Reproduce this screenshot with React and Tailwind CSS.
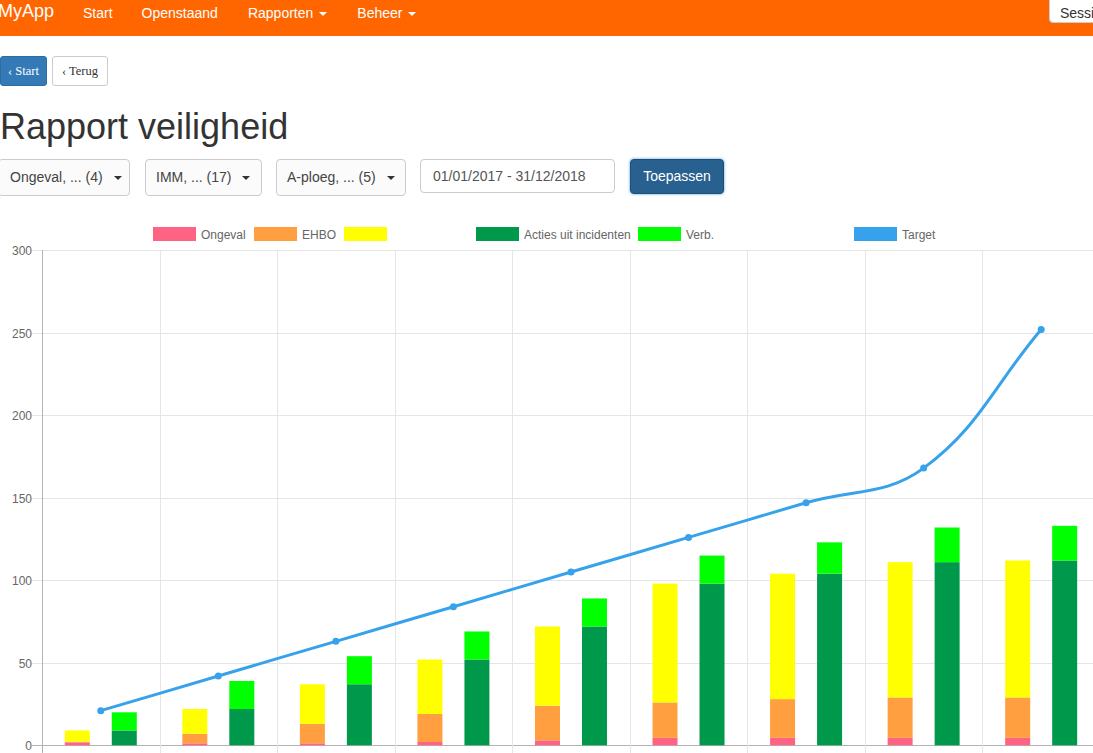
import React from 'react';

const X0 = 42;
const CW = 117.55;
const Y0 = 745.3;
const K = 1.65;

const yOf = (v) => Y0 - v * K;
const cxOf = (i) => X0 + CW * (i + 0.5);

// cumulative tops per category
const pink = [1.8, 1.2, 1.2, 2, 3, 4.5, 4.5, 4.5, 4.5];
const orange = [2.2, 7, 13, 19, 24, 26, 28, 29, 29];
const yellow = [9, 22, 37, 52, 72, 98, 104, 111, 112];
const darkGreen = [9, 22, 37, 52, 72, 98, 104, 111, 112];
const lightGreen = [20, 39, 54, 69, 89, 115, 123, 132, 133];
const target = [21, 42, 63, 84, 105, 126, 147, 168, 252];

const legend = [
    { x: 153, color: '#ff6384', label: 'Ongeval' },
    { x: 254, color: '#ff9f40', label: 'EHBO' },
    { x: 344, color: '#ffff00', label: '' },
    { x: 476, color: '#00994c', label: 'Acties uit incidenten' },
    { x: 638, color: '#00ff00', label: 'Verb.' },
    { x: 854, color: '#36a2eb', label: 'Target' },
];

function splinePath(pts, t = 0.4) {
    const cps = pts.map((p, i) => {
        const prev = pts[i - 1] || p;
        const next = pts[i + 1] || p;
        const d01 = Math.hypot(p.x - prev.x, p.y - prev.y);
        const d12 = Math.hypot(next.x - p.x, next.y - p.y);
        const s01 = d01 + d12 ? d01 / (d01 + d12) : 0;
        const s12 = d01 + d12 ? d12 / (d01 + d12) : 0;
        const fa = t * s01;
        const fb = t * s12;
        return {
            prev: { x: p.x - fa * (next.x - prev.x), y: p.y - fa * (next.y - prev.y) },
            next: { x: p.x + fb * (next.x - prev.x), y: p.y + fb * (next.y - prev.y) },
        };
    });
    let d = `M${pts[0].x},${pts[0].y}`;
    for (let i = 1; i < pts.length; i++) {
        const a = cps[i - 1].next;
        const b = cps[i].prev;
        d += ` C${a.x},${a.y} ${b.x},${b.y} ${pts[i].x},${pts[i].y}`;
    }
    return d;
}

function Caret({ className = 'ml-[6px] border-t-white' }) {
    return (
        <span
            className={`inline-block w-0 h-0 align-middle border-t-[4px] border-x-[4px] border-x-transparent ${className}`}
        />
    );
}

function Chart() {
    const font = 'Liberation Sans, Arial, sans-serif';
    const ticks = [0, 50, 100, 150, 200, 250, 300];
    const pts = target.map((v, i) => ({ x: cxOf(i), y: yOf(v) }));

    return (
        <svg width="1100" height="543" viewBox="0 210 1100 543" className="block">
            {/* legend */}
            {legend.map((l) => (
                <g key={l.x}>
                    <rect x={l.x} y={227} width={43} height={14} fill={l.color} />
                    {l.label && (
                        <text x={l.x + 48} y={238.5} fontSize="12" fill="#666" fontFamily={font}>
                            {l.label}
                        </text>
                    )}
                </g>
            ))}

            {/* horizontal grid */}
            {ticks.map((v) => {
                const y = Math.round(yOf(v)) + 0.5;
                return (
                    <g key={v}>
                        <line x1={32} x2={1100} y1={y} y2={y} stroke={v === 0 ? '#b3b3b3' : '#e5e5e5'} />
                        <text x={32} y={y + 4} fontSize="12" fill="#666" textAnchor="end" fontFamily={font}>
                            {v}
                        </text>
                    </g>
                );
            })}

            {/* vertical grid */}
            {Array.from({ length: 10 }).map((_, k) => {
                const x = Math.round(X0 + CW * k) + 0.5;
                return (
                    <line key={k} x1={x} x2={x} y1={250} y2={756} stroke={k === 0 ? '#b3b3b3' : '#e5e5e5'} />
                );
            })}

            {/* bars */}
            {target.map((_, i) => {
                const cx = cxOf(i);
                const x1 = cx - 36;
                const x2 = cx + 11;
                return (
                    <g key={i}>
                        <rect x={x1} y={yOf(pink[i])} width={25} height={pink[i] * K} fill="#ff6384" />
                        <rect x={x1} y={yOf(orange[i])} width={25} height={(orange[i] - pink[i]) * K} fill="#ff9f40" />
                        <rect x={x1} y={yOf(yellow[i])} width={25} height={(yellow[i] - orange[i]) * K} fill="#ffff00" />
                        <rect x={x2} y={yOf(darkGreen[i])} width={25} height={darkGreen[i] * K} fill="#00994c" />
                        <rect x={x2} y={yOf(lightGreen[i])} width={25} height={(lightGreen[i] - darkGreen[i]) * K} fill="#00ff00" />
                    </g>
                );
            })}

            {/* target line */}
            <path d={splinePath(pts)} fill="none" stroke="#36a2eb" strokeWidth="3" />
            {pts.map((p, i) => (
                <circle key={i} cx={p.x} cy={p.y} r="3.5" fill="#36a2eb" />
            ))}
        </svg>
    );
}

export default function App() {
    return (
        <div className="w-[1093px] h-[753px] overflow-hidden bg-white font-['Liberation_Sans',Arial,sans-serif] text-[#333]">
            <nav className="h-[36px] bg-[#ff6600] border-b border-[#f36a12] flex items-start text-white text-[14px]">
                <span className="ml-[-2px] pt-[1px] text-[18px] leading-[20px]">MyApp</span>
                <span className="ml-[29px] pt-[3px] leading-[20px]">Start</span>
                <span className="ml-[29px] pt-[3px] leading-[20px]">Openstaand</span>
                <span className="ml-[30px] pt-[3px] leading-[20px]">
                    Rapporten
                    <Caret />
                </span>
                <span className="ml-[30px] pt-[3px] leading-[20px]">
                    Beheer
                    <Caret />
                </span>
                <div className="ml-auto mr-[-30px] mt-[-6px] h-[29px] w-[74px] pt-[8px] pl-[10px] bg-white border border-[#ccc] rounded-[4px] text-[#333] leading-[20px] whitespace-nowrap">
                    Sessie
                </div>
            </nav>

            <div className="mt-[20px] flex gap-[5px] font-['Liberation_Serif','Times_New_Roman',serif] text-[12.5px]">
                <div className="w-[47px] h-[30px] flex items-center justify-center bg-[#337ab7] border border-[#2e6da4] rounded-[3px] text-white">
                    ‹ Start
                </div>
                <div className="w-[56px] h-[30px] flex items-center justify-center bg-white border border-[#ccc] rounded-[3px] text-[#333]">
                    ‹ Terug
                </div>
            </div>

            <h1 className="mt-[21px] text-[36px] leading-[40px] text-[#333]">Rapport veiligheid</h1>

            <div className="mt-[12px] flex items-start text-[14px]">
                <div className="ml-[-2px] w-[132px] h-[37px] flex items-center pl-[11px] bg-[#fbfbfb] border border-[#ccc] rounded-[4px] text-[#444]">
                    Ongeval, ... (4)
                    <Caret className="ml-[11px] border-t-[#333]" />
                </div>
                <div className="ml-[15px] w-[117px] h-[37px] flex items-center pl-[10px] bg-[#fbfbfb] border border-[#ccc] rounded-[4px] text-[#444]">
                    IMM, ... (17)
                    <Caret className="ml-[11px] border-t-[#333]" />
                </div>
                <div className="ml-[14px] w-[130px] h-[37px] flex items-center pl-[10px] bg-[#fbfbfb] border border-[#ccc] rounded-[4px] text-[#444]">
                    A-ploeg, ... (5)
                    <Caret className="ml-[11px] border-t-[#333]" />
                </div>
                <div className="ml-[14px] w-[195px] h-[34px] flex items-center pl-[12px] bg-white border border-[#ccc] rounded-[4px] text-[#555]">
                    01/01/2017 - 31/12/2018
                </div>
                <div className="ml-[15px] w-[94px] h-[35px] flex items-center justify-center bg-[#286090] border border-[#204d74] rounded-[4px] text-white shadow-[0_0_2px_1px_rgba(102,175,233,0.6)]">
                    Toepassen
                </div>
            </div>

            <div className="mt-[14px]">
                <Chart />
            </div>
        </div>
    );
}
